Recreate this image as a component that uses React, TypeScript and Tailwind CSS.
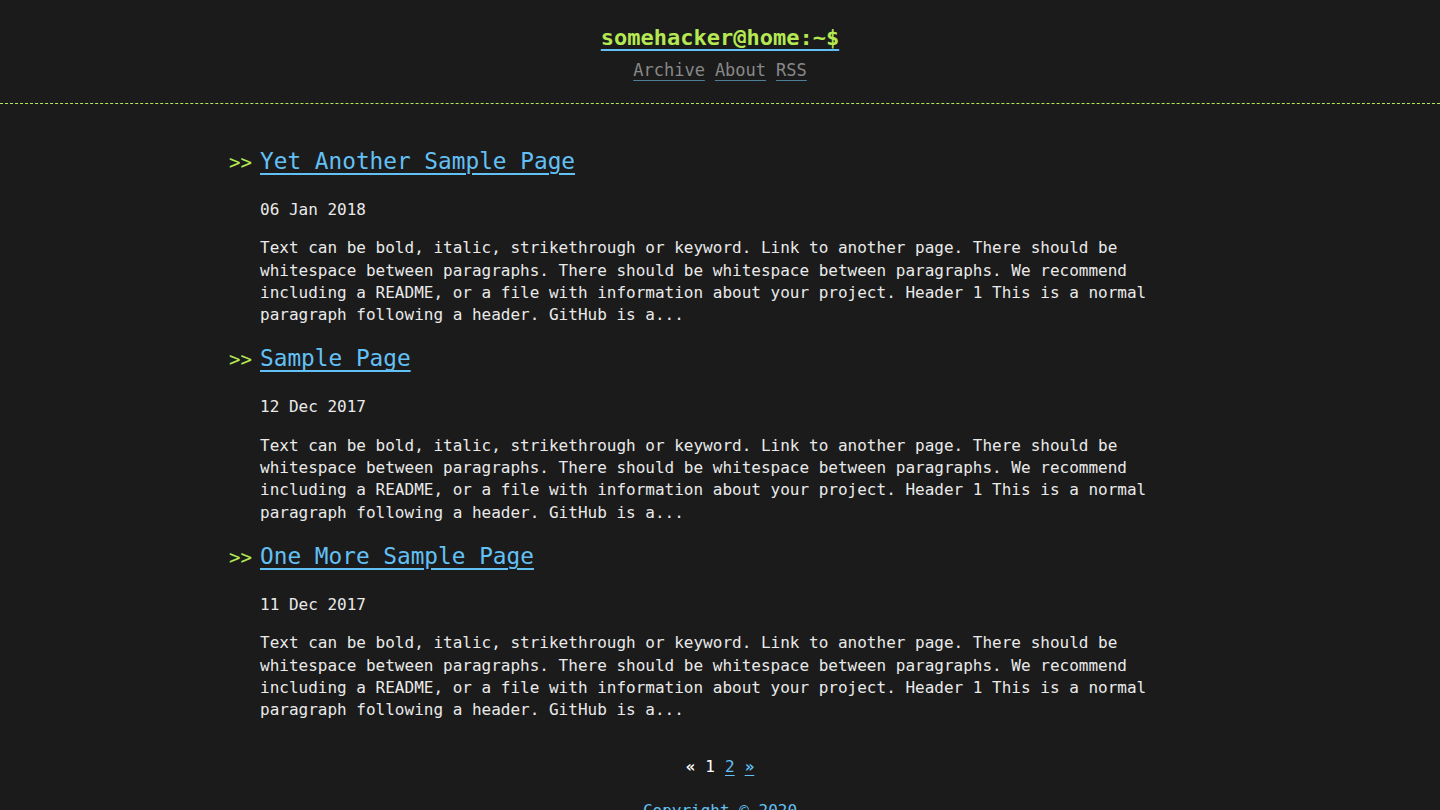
import React from "react";

const mono = { fontFamily: '"DejaVu Sans Mono", "Liberation Mono", monospace' };

const excerpt =
  "Text can be bold, italic, strikethrough or keyword. Link to another page. There should be whitespace between paragraphs. There should be whitespace between paragraphs. We recommend including a README, or a file with information about your project. Header 1 This is a normal paragraph following a header. GitHub is a...";

const posts = [
  { title: "Yet Another Sample Page", date: "06 Jan 2018" },
  { title: "Sample Page", date: "12 Dec 2017" },
  { title: "One More Sample Page", date: "11 Dec 2017" },
];

function Post({ title, date }: { title: string; date: string }) {
  return (
    <article className="flex mb-[16px]">
      <span className="w-[32px] shrink-0 pl-px text-[19px] leading-[32px] text-[#b5e853] pt-[1px]">
        &gt;&gt;
      </span>
      <div className="flex-1 min-w-0">
        <h2 className="text-[22.75px] leading-[32px] mb-[22px]">
          <a
            href="#"
            className="text-[#63c0f5] underline decoration-[#63c0f5] underline-offset-[4px] decoration-[1.5px]"
          >
            {title}
          </a>
        </h2>
        <p className="text-[16px] leading-[22.3px] mb-4 text-[#eaeaea]">{date}</p>
        <p className="text-[16px] leading-[22.3px] text-[#eaeaea] pr-[60px]">{excerpt}</p>
      </div>
    </article>
  );
}

export default function App() {
  return (
    <div className="min-h-screen bg-[#1b1b1b] text-[#eaeaea]" style={mono}>
      <header className="border-b border-dashed border-[#b5e853] pt-[23px] pb-[21px] text-center">
        <h1 className="text-[22px] leading-[30px] font-bold">
          <a
            href="#"
            className="text-[#b5e853] underline decoration-[#63c0f5] decoration-2 underline-offset-[4px]"
          >
            somehacker@home:~$
          </a>
        </h1>
        <nav className="mt-[5px] text-[17px] leading-[24px] text-[#888888] flex justify-center gap-[10px]">
          <a href="#" className="underline decoration-[#4f7f99] underline-offset-[4px]">
            Archive
          </a>
          <a href="#" className="underline decoration-[#4f7f99] underline-offset-[4px]">
            About
          </a>
          <a href="#" className="underline decoration-[#4f7f99] underline-offset-[4px]">
            RSS
          </a>
        </nav>
      </header>

      <main className="w-[984px] mx-auto pt-[41px]">
        {posts.map((p) => (
          <Post key={p.title} title={p.title} date={p.date} />
        ))}

        <div className="mt-[35px] flex justify-center gap-[10px] text-[16px] leading-[22.4px]">
          <span className="font-bold text-white">«</span>
          <span className="text-white">1</span>
          <a href="#" className="text-[#63c0f5] underline underline-offset-[3px]">
            2
          </a>
          <a href="#" className="text-[#63c0f5] underline underline-offset-[3px] font-bold">
            »
          </a>
        </div>

        <footer className="mt-[21px] pb-6 text-center text-[16px] leading-[22.4px] text-[#63c0f5]">
          Copyright © 2020
        </footer>
      </main>
    </div>
  );
}
